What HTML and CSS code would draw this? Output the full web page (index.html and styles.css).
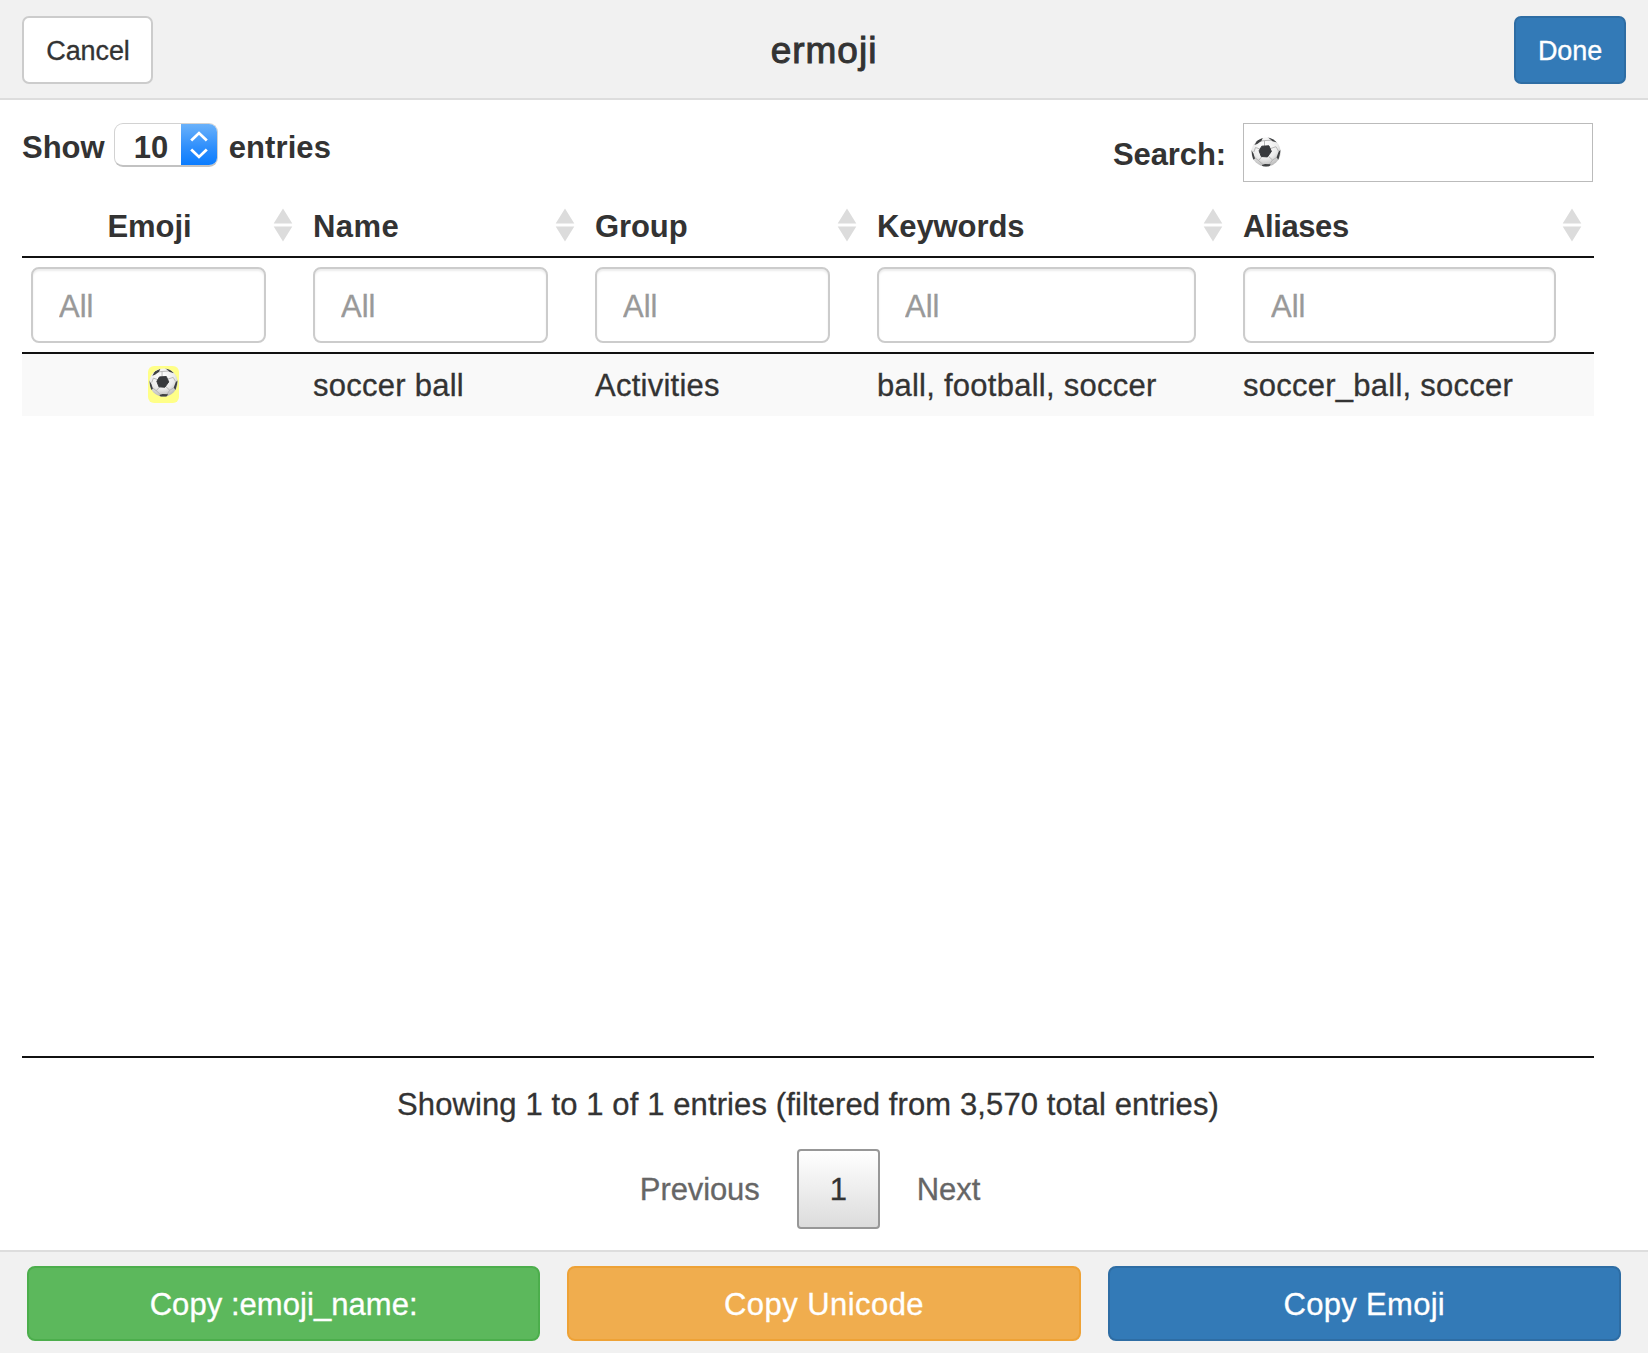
FILE: index.html
```html
<!DOCTYPE html>
<html lang="en">
<head>
<meta charset="utf-8">
<title>ermoji</title>
<link rel="stylesheet" href="styles.css">
</head>
<body>
<svg class="defs" width="0" height="0" aria-hidden="true">
  <defs>
    <radialGradient id="shade" cx="45%" cy="30%" r="72%">
      <stop offset="0" stop-color="#fff"/>
      <stop offset=".6" stop-color="#ececec"/>
      <stop offset="1" stop-color="#b5b5b5"/>
    </radialGradient>
    <clipPath id="round"><circle cx="15" cy="15" r="14.6"/></clipPath>
    <symbol id="ball" viewBox="0 0 30 30">
      <circle cx="15" cy="15" r="14.6" fill="url(#shade)"/>
      <g clip-path="url(#round)">
        <path d="M13.5 3.5V9M9.5 12.2 4.5 10.5M18.7 11.8 25 9.7M11 19.5 7.5 23.5M17.6 19.4 21.5 23M4.5 4.8 13.5 3.6 22.5 3M4.5 10.5 2.8 15M25 9.7 27.5 14M7.5 23.5 3 20M7.5 23.5 12.5 28M21.5 23 26.5 20M21.5 23 18 28" fill="none" stroke="#b0b0b0" stroke-width=".9"/>
        <path d="M10.8 9.2 17.9 8.8 20.4 14.4 16.4 19.9 10.3 19.5 8.1 13.8Z" fill="#383a3d" stroke="#383a3d" stroke-linejoin="round"/>
        <path d="M3.4 8 6.2 3.4 11.8 .8 10.4 4 6.2 7ZM16.5 0 21.5 .8 26 5.4 21.5 4.2ZM0 12.6 2.5 16.5 4 21.4 2 23ZM30 12.6 27.7 14.5 25.6 20.2 27.4 23ZM10.8 28 14 27 19.7 27.2 18 30H12Z" fill="#3f4143"/>
      </g>
    </symbol>
    <symbol id="sort" viewBox="0 0 20 34">
      <path d="M10 .5 19.3 15.5H.7ZM10 33.5 19.3 18.5H.7Z" fill="#dcdcdc"/>
    </symbol>
  </defs>
</svg>
<div class="app">
  <header class="titlebar">
    <button class="btn cancel">Cancel</button>
    <h1 class="title">ermoji</h1>
    <button class="btn done">Done</button>
  </header>

  <main class="content">
    <div class="controls">
      <div class="length">
        <span>Show</span>
        <span class="select"><span class="value">10</span><span class="arrows"><svg width="18" height="28" viewBox="0 0 18 28"><path d="M1.2 9.6 9 2.1 16.8 9.6M1.2 18.4 9 25.9 16.8 18.4" fill="none" stroke="#fff" stroke-width="2.8"/></svg></span></span>
        <span class="entries">entries</span>
      </div>
      <div class="search">
        <span class="search-label">Search:</span>
        <div class="search-box"><svg width="30" height="30"><use href="#ball"/></svg></div>
      </div>
    </div>

    <div class="row head">
      <div class="cell center">Emoji<svg class="sort"><use href="#sort"/></svg></div>
      <div class="cell name">Name<svg class="sort"><use href="#sort"/></svg></div>
      <div class="cell">Group<svg class="sort"><use href="#sort"/></svg></div>
      <div class="cell">Keywords<svg class="sort"><use href="#sort"/></svg></div>
      <div class="cell aliases">Aliases<svg class="sort"><use href="#sort"/></svg></div>
    </div>
    <div class="row filters">
      <div class="cell"><input class="filter" placeholder="All"></div>
      <div class="cell"><input class="filter" placeholder="All"></div>
      <div class="cell"><input class="filter" placeholder="All"></div>
      <div class="cell"><input class="filter" placeholder="All"></div>
      <div class="cell"><input class="filter last" placeholder="All"></div>
    </div>
    <div class="body">
      <div class="row record">
        <div class="cell symbol"><span class="mark"><svg width="29" height="29"><use href="#ball"/></svg></span></div>
        <div class="cell">soccer ball</div>
        <div class="cell">Activities</div>
        <div class="cell">ball, football, soccer</div>
        <div class="cell">soccer_ball, soccer</div>
      </div>
    </div>

    <div class="info">Showing 1 to 1 of 1 entries (filtered from 3,570 total entries)</div>
    <nav class="pages">
      <span class="page">Previous</span>
      <span class="page current">1</span>
      <span class="page">Next</span>
    </nav>
  </main>

  <footer class="actions">
    <button class="btn action green">Copy :emoji_name:</button>
    <button class="btn action orange">Copy Unicode</button>
    <button class="btn action blue">Copy Emoji</button>
  </footer>
</div>
</body>
</html>
```
FILE: styles.css
```css
* { box-sizing: border-box; }
body {
  margin: 0;
  background: #fff;
  color: #333;
  font: 31px/44px "Liberation Sans", Arial, sans-serif;
  letter-spacing: .25px;
  -webkit-text-stroke: .3px;
}
.defs { position: absolute; }
.app { display: flex; flex-direction: column; height: 1353px; overflow: hidden; }

.titlebar {
  display: flex;
  justify-content: space-between;
  align-items: flex-start;
  height: 100px;
  padding: 16px 22px;
  background: #f1f1f1;
  border-bottom: 2px solid #ddd;
  position: relative;
}
.title {
  position: absolute;
  left: 0;
  right: 0;
  top: 26px;
  margin: 0;
  text-align: center;
  font-size: 37px;
  line-height: 50px;
  font-weight: 400;
  letter-spacing: 1px;
  -webkit-text-stroke: 1px #333;
  pointer-events: none;
}
.btn {
  font: 31px/1 "Liberation Sans", Arial, sans-serif;
  letter-spacing: .3px;
  border: 2px solid;
  border-radius: 8px;
  padding: 2px 0 0;
  color: #fff;
  -webkit-text-stroke: .3px;
}
.cancel, .done { height: 68px; border-radius: 7px; font-size: 27px; letter-spacing: -.1px; }
.cancel { width: 131px; padding-left: 1px; background: #fff; border-color: #ccc; color: #333; }
.done { width: 112px; }
.done, .blue { background: #337ab7; border-color: #2e6da4; }

.content { flex: 1; padding: 23px 54px 0 22px; }
.controls { display: flex; justify-content: space-between; height: 75px; font-weight: 700; letter-spacing: 0; padding-right: 1px; -webkit-text-stroke: 0; }
.length { display: flex; align-items: flex-start; height: 44px; line-height: 49px; }
.select {
  display: flex;
  width: 104px;
  height: 44px;
  margin: 0 11px 0 9px;
  border: 1px solid #d2d2d2;
  border-bottom: 2px solid #c2c2c2;
  border-radius: 9px;
  overflow: hidden;
}
.value { flex: 1; padding-left: 19px; line-height: 48px; }
.entries { letter-spacing: .1px; }
.arrows {
  display: flex;
  align-items: center;
  justify-content: center;
  width: 37px;
  margin: -1px -1px -2px 0;
  background: linear-gradient(#6cb3fa, #2f8ffc 55%, #067aff);
}
.search { display: flex; line-height: 64px; }
.search-label { margin-right: 17px; letter-spacing: -.1px; }
.search-box { display: flex; width: 350px; height: 59px; border: 1px solid #bbb; padding: 13px 7px; }

.row { display: grid; grid-template-columns: 282px 282px 282px 366px 360px; }
.cell { position: relative; padding: 0 38px 0 9px; white-space: nowrap; }
.center { padding-right: 36px; text-align: center; }
.head { height: 60px; border-bottom: 2px solid #111; font-weight: 700; letter-spacing: -.1px; line-height: 58px; -webkit-text-stroke: 0; }
.name { letter-spacing: .4px; }
.aliases { letter-spacing: -.4px; }
.sort { position: absolute; right: 11px; top: 10px; width: 20px; height: 34px; }
.aliases .sort { right: 12px; }
.filters { height: 96px; border-bottom: 2px solid #111; padding-top: 9px; }
.filter {
  display: block;
  width: 100%;
  height: 76px;
  padding: 4px 26px 0;
  border: 2px solid #ccc;
  border-radius: 8px;
  box-shadow: inset 0 2px 2px rgba(0, 0, 0, .075);
  font: 31px "Liberation Sans", Arial, sans-serif;
  background: #fff;
}
.filter.last { width: 313px; }
.filter::placeholder { color: #999; opacity: 1; }
.body { height: 704px; border-bottom: 2px solid #111; }
.record { height: 62px; background: #f9f9f9; line-height: 64px; }
.symbol { padding-right: 9px; }
.mark {
  display: flex;
  width: 31px;
  height: 37px;
  margin: 12px auto 0;
  padding: 2px 1px;
  background: #ffff88;
  border-radius: 6px;
}
.info { margin-top: 25px; text-align: center; line-height: 44px; letter-spacing: .11px; }
.pages { display: flex; justify-content: center; margin-top: 22px; letter-spacing: -.1px; }
.page { height: 80px; padding: 0 31px; line-height: 78px; color: #666; border: 2px solid transparent; margin-left: 4px; }
.current {
  color: #333;
  border: 2px solid #979797;
  border-radius: 4px;
  background: linear-gradient(#fff, #dcdcdc);
}

.actions {
  display: grid;
  grid-template-columns: repeat(3, 1fr);
  gap: 27px;
  height: 103px;
  padding: 14px 27px 0;
  background: #f1f1f1;
  border-top: 2px solid #ddd;
}
.action { height: 75px; }
.green { background: #5cb85c; border-color: #4cae4c; letter-spacing: .05px; }
.orange { background: #f0ad4e; border-color: #eea236; letter-spacing: .45px; }
```
